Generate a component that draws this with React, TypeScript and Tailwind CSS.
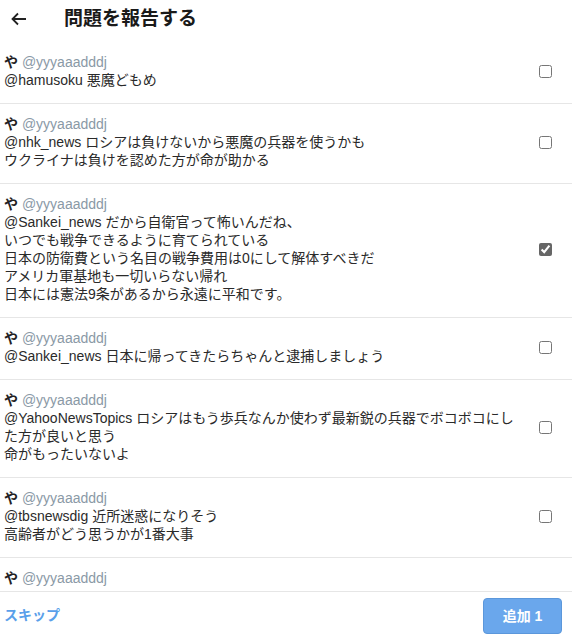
import React, { useState } from "react";

type Item = {
  id: number;
  name: string;
  handle: string;
  lines: string[];
};

const items: Item[] = [
  { id: 1, name: "や", handle: "@yyyaaadddj", lines: ["@hamusoku 悪魔どもめ"] },
  {
    id: 2,
    name: "や",
    handle: "@yyyaaadddj",
    lines: ["@nhk_news ロシアは負けないから悪魔の兵器を使うかも", "ウクライナは負けを認めた方が命が助かる"],
  },
  {
    id: 3,
    name: "や",
    handle: "@yyyaaadddj",
    lines: [
      "@Sankei_news だから自衛官って怖いんだね、",
      "いつでも戦争できるように育てられている",
      "日本の防衛費という名目の戦争費用は0にして解体すべきだ",
      "アメリカ軍基地も一切いらない帰れ",
      "日本には憲法9条があるから永遠に平和です。",
    ],
  },
  {
    id: 4,
    name: "や",
    handle: "@yyyaaadddj",
    lines: ["@Sankei_news 日本に帰ってきたらちゃんと逮捕しましょう"],
  },
  {
    id: 5,
    name: "や",
    handle: "@yyyaaadddj",
    lines: [
      "@YahooNewsTopics ロシアはもう歩兵なんか使わず最新鋭の兵器でボコボコにした方が良いと思う",
      "命がもったいないよ",
    ],
  },
  {
    id: 6,
    name: "や",
    handle: "@yyyaaadddj",
    lines: ["@tbsnewsdig 近所迷惑になりそう", "高齢者がどう思うかが1番大事"],
  },
  // last row is cut by the footer, only its header line shows
  { id: 7, name: "や", handle: "@yyyaaadddj", lines: [] },
];

export default function App() {
  const [checked, setChecked] = useState<number[]>([3]);

  const toggle = (id: number) => {
    setChecked((prev) =>
      prev.includes(id) ? prev.filter((x) => x !== id) : [...prev, id]
    );
  };

  return (
    <div
      className="flex h-[639px] w-[572px] flex-col bg-white text-[#2a2a2a]"
      style={{ fontFamily: '"Liberation Sans", Arial, "Noto Sans CJK JP", sans-serif' }}
    >
      {/* Header */}
      <div className="flex h-[42px] shrink-0 items-center pb-[4px]">
        <button className="flex w-[64px] items-center pl-[11px] text-[#222]">
          <svg width="16" height="14" viewBox="0 0 16 14" fill="none">
            <path d="M15 7H2M7 1.5 1.5 7 7 12.5" stroke="currentColor" strokeWidth="1.8" />
          </svg>
        </button>
        <h1 className="text-[19px] font-bold text-[#1a1a1a]">問題を報告する</h1>
      </div>

      {/* List */}
      <div className="min-h-0 flex-1 overflow-hidden">
        {items.map((item) => (
          <div
            key={item.id}
            className={`flex items-center border-b border-[#e6e6e6] pb-[14px] pl-[4px] pt-[11px] ${
              item.lines.length === 0 ? "min-h-[96px]" : "min-h-[62px]"
            }`}
          >
            <div className="min-w-0 flex-1 self-start text-[14px] leading-[18px]">
              <div>
                <span className="font-bold text-[#222]">{item.name}</span>{" "}
                <span className="text-[#8a99a6]">{item.handle}</span>
              </div>
              {item.lines.map((line, i) => (
                <div key={i}>{line}</div>
              ))}
            </div>
            <div className="flex w-[58px] shrink-0 justify-center self-center pl-[4px]">
              <input
                type="checkbox"
                checked={checked.includes(item.id)}
                onChange={() => toggle(item.id)}
                className="m-0 h-[13px] w-[13px] accent-[#666]"
              />
            </div>
          </div>
        ))}
      </div>

      {/* Footer */}
      <div className="flex h-[48px] shrink-0 items-center justify-between border-t border-[#e6e6e6] pl-[4px] pr-[10px]">
        <button className="text-[14px] font-bold text-[#5aa0ea]">スキップ</button>
        <button className="mt-[1px] h-[36px] w-[79px] rounded-[4px] border border-[#5b97db] bg-[#6aa7ec] text-[14px] font-bold text-white">
          追加 {checked.length}
        </button>
      </div>
    </div>
  );
}
